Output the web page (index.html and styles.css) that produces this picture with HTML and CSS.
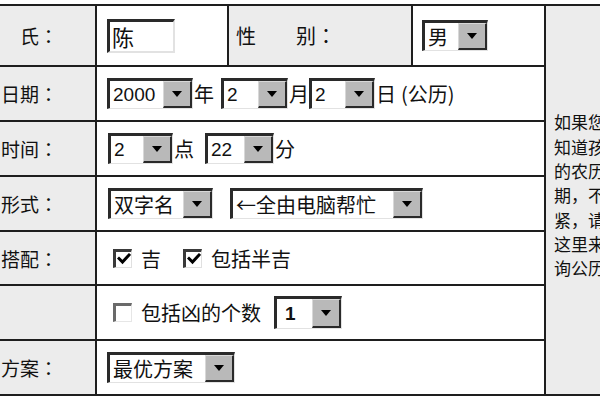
FILE: index.html
```html
<!DOCTYPE html>
<html lang="zh">
<head>
<meta charset="utf-8">
<title>起名表单</title>
<link rel="stylesheet" href="styles.css">
</head>
<body>
<div class="form">
  <div class="lbl">氏<span class="co">：</span></div>
  <div class="cell pad10"><div class="txt">陈</div></div>
  <div class="cell gray sex">性　　别<span class="co">：</span></div>
  <div class="cell pad9"><div class="sel w66"><span class="val cjk">男</span><span class="btn"><i></i></span></div></div>
  <div class="side"><p>如果您不知道孩子的农历日期，不要紧，请到这里来查询公历。</p></div>

  <div class="lbl">日期<span class="co">：</span></div>
  <div class="cell wide pad10">
    <div class="sel w86"><span class="val num">2000</span><span class="btn"><i></i></span></div>
    <span class="unit">年</span>
    <div class="sel w67 ml4"><span class="val num">2</span><span class="btn"><i></i></span></div>
    <span class="unit">月</span>
    <div class="sel w66"><span class="val num">2</span><span class="btn"><i></i></span></div>
    <span class="unit">日</span><span class="unit paren">(公历)</span>
  </div>

  <div class="lbl">时间<span class="co">：</span></div>
  <div class="cell wide pad11">
    <div class="sel w65"><span class="val num">2</span><span class="btn"><i></i></span></div>
    <span class="unit">点</span>
    <div class="sel w69 ml10"><span class="val num">22</span><span class="btn"><i></i></span></div>
    <span class="unit">分</span>
  </div>

  <div class="lbl">形式<span class="co">：</span></div>
  <div class="cell wide pad11">
    <div class="sel w105"><span class="val cjk">双字名</span><span class="btn"><i></i></span></div>
    <div class="sel w193 ml17"><span class="val cjk">←全由电脑帮忙</span><span class="btn"><i></i></span></div>
  </div>

  <div class="lbl">搭配<span class="co">：</span></div>
  <div class="cell wide pad16">
    <span class="chk on"><svg viewBox="0 0 14 14"><path d="M2 6.5 L5.5 10 L12 3" /></svg></span>
    <span class="ctext">吉</span>
    <span class="chk on ml20"><svg viewBox="0 0 14 14"><path d="M2 6.5 L5.5 10 L12 3" /></svg></span>
    <span class="ctext">包括半吉</span>
  </div>

  <div class="lbl"></div>
  <div class="cell wide pad16">
    <span class="chk off"></span>
    <span class="ctext">包括凶的个数</span>
    <div class="sel w68 tall ml12"><span class="val num bold">1</span><span class="btn"><i></i></span></div>
  </div>

  <div class="lbl">方案<span class="co">：</span></div>
  <div class="cell wide pad10">
    <div class="sel w128"><span class="val cjk">最优方案</span><span class="btn"><i></i></span></div>
  </div>
</div>
</body>
</html>
```

FILE: styles.css
```css
html, body {
  margin: 0;
  padding: 0;
  overflow: hidden;
  background: #ffffff;
}

body {
  font-family: "Noto Sans CJK SC", "Liberation Sans", sans-serif;
  color: #111111;
}

.co {
  font-family: "Noto Sans CJK TC", "Noto Sans CJK SC", sans-serif;
}

.form {
  margin-top: 4px;
  width: 626px;
  display: grid;
  grid-template-columns: 95px 130px 182px 131px 80px;
  grid-template-rows: 59px 53px 53px 53px 52px 53px 53px;
  gap: 2px;
  background: #1e1e1e;
  border-top: 2px solid #1e1e1e;
  border-bottom: 2px solid #1e1e1e;
}

.lbl {
  background: #ececec;
  display: flex;
  align-items: center;
  justify-content: flex-end;
  padding-right: 37px;
  font-size: 19px;
  white-space: nowrap;
}

.cell {
  background: #ffffff;
  display: flex;
  align-items: center;
  white-space: nowrap;
  font-size: 20px;
}

.cell.gray {
  background: #ececec;
}

.wide {
  grid-column: 2 / span 3;
}

.pad9 { padding-left: 9px; }
.pad10 { padding-left: 10px; }
.pad11 { padding-left: 11px; }
.pad16 { padding-left: 16px; }

.sex {
  padding-left: 7px;
  font-size: 20px;
}

.side {
  grid-column: 5;
  grid-row: 1 / span 7;
  background: #ececec;
  display: flex;
  align-items: center;
  padding-left: 8px;
  padding-bottom: 9px;
}

.side p {
  margin: 0;
  width: 69px;
  font-size: 17px;
  line-height: 24.3px;
  word-break: break-all;
}

/* text input */
.txt {
  box-sizing: border-box;
  width: 68px;
  height: 34px;
  background: #ffffff;
  border-top: 3px solid #2a2a2a;
  border-left: 3px solid #2a2a2a;
  border-right: 2px solid #e2e2e2;
  border-bottom: 2px solid #e2e2e2;
  font-size: 22px;
  line-height: 28px;
  padding-left: 2px;
}

/* select boxes */
.sel {
  box-sizing: border-box;
  display: inline-flex;
  height: 31px;
  background: #ffffff;
  border-top: 3px solid #2a2a2a;
  border-left: 3px solid #2a2a2a;
  border-right: 1px solid #e2e2e2;
  border-bottom: 1px solid #e2e2e2;
  flex-shrink: 0;
}

.sel.tall {
  height: 33px;
}

.sel .val {
  flex: 1;
  display: flex;
  align-items: center;
  padding-left: 3px;
  overflow: hidden;
}

.sel .val.num {
  font-family: "Liberation Sans", sans-serif;
  font-size: 19px;
}

.sel .val.bold {
  font-weight: bold;
  padding-left: 8px;
}

.sel .val.cjk {
  font-size: 20px;
}

.sel .btn {
  box-sizing: border-box;
  width: 29px;
  background: #b9b9b9;
  border-top: 1px solid #d8d8d8;
  border-left: 1px solid #d8d8d8;
  border-right: 2px solid #2a2a2a;
  border-bottom: 2px solid #2a2a2a;
  display: flex;
  align-items: center;
  justify-content: center;
}

.sel .btn i {
  width: 0;
  height: 0;
  border-left: 5px solid transparent;
  border-right: 5px solid transparent;
  border-top: 6px solid #000000;
}

.w65 { width: 65px; }
.w66 { width: 66px; }
.w67 { width: 67px; }
.w68 { width: 68px; }
.w69 { width: 69px; }
.w86 { width: 86px; }
.w105 { width: 105px; }
.w128 { width: 128px; }
.w193 { width: 193px; }

.ml4 { margin-left: 7px; }
.ml10 { margin-left: 11px; }
.ml12 { margin-left: 13px; }
.ml17 { margin-left: 17px; }
.ml20 { margin-left: 22px; }

.unit {
  font-size: 20px;
  margin-left: 1px;
}

.paren {
  margin-left: 5px;
}

/* checkboxes */
.chk {
  box-sizing: border-box;
  width: 19px;
  height: 19px;
  display: inline-flex;
  align-items: center;
  justify-content: center;
  background: #ffffff;
  flex-shrink: 0;
}

.chk.on {
  border-top: 3px solid #3a3a3a;
  border-left: 3px solid #3a3a3a;
  border-right: 1px solid #e0e0e0;
  border-bottom: 1px solid #e0e0e0;
}

.chk.off {
  border-top: 3px solid #6a6a6a;
  border-left: 3px solid #6a6a6a;
  border-right: 1px solid #e6e6e6;
  border-bottom: 1px solid #e6e6e6;
}

.chk svg {
  width: 14px;
  height: 14px;
}

.chk path {
  fill: none;
  stroke: #000000;
  stroke-width: 3;
  stroke-linecap: square;
}

.ctext {
  font-size: 20px;
  margin-left: 9px;
}
```
